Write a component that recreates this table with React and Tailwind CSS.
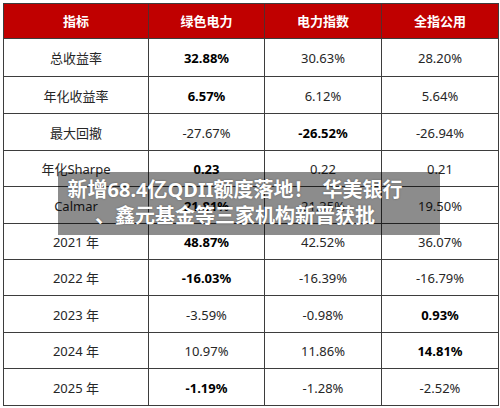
const rows = [
  { name: "总收益率", h: "h-[38px]", v: ["32.88%", "30.63%", "28.20%"], bold: 0 },
  { name: "年化收益率", h: "h-[37px]", v: ["6.57%", "6.12%", "5.64%"], bold: 0 },
  { name: "最大回撤", h: "h-[37px]", v: ["-27.67%", "-26.52%", "-26.94%"], bold: 1 },
  { name: "年化Sharpe", h: "h-[36px]", v: ["0.23", "0.22", "0.21"], bold: 0 },
  { name: "Calmar", h: "h-[37px]", v: ["21.81%", "21.35%", "19.50%"], bold: 0 },
  { name: "2021 年", h: "h-[36px]", v: ["48.87%", "42.52%", "36.07%"], bold: 0 },
  { name: "2022 年", h: "h-[36px]", v: ["-16.03%", "-16.39%", "-16.79%"], bold: 0 },
  { name: "2023 年", h: "h-[37px]", v: ["-3.59%", "-0.98%", "0.93%"], bold: 2 },
  { name: "2024 年", h: "h-[36px]", v: ["10.97%", "11.86%", "14.81%"], bold: 2 },
  { name: "2025 年", h: "h-[37px]", v: ["-1.19%", "-1.28%", "-2.52%"], bold: 0 },
];

const headers = ["指标", "绿色电力", "电力指数", "全指公用"];

export default function App() {
  return (
    <div
      className="relative w-[500px] h-[408px] bg-white overflow-hidden"
      style={{ fontFamily: '"Noto Sans", "Noto Sans CJK SC", sans-serif' }}
    >
      {/* Table */}
      <div className="ml-[3px] mt-[3px] w-[496px] border border-[#3d3d3d] text-[13px] text-[#262626]">
        <div className="grid grid-cols-[145px_116px_117px_1fr] h-[34px] bg-[#c00000] text-white font-bold">
          {headers.map((h, i) => (
            <div
              key={h}
              className={`flex items-center justify-center pt-[2px] ${
                i < 3 ? "border-r border-[#5a2a2a]" : ""
              }`}
            >
              {h}
            </div>
          ))}
        </div>

        {rows.map((r) => (
          <div
            key={r.name}
            className={`grid grid-cols-[145px_116px_117px_1fr] border-t border-[#3d3d3d] ${r.h}`}
          >
            <div className="flex items-center justify-center pt-[3px] border-r border-[#3d3d3d]">
              {r.name}
            </div>
            {r.v.map((v, i) => (
              <div
                key={i}
                className={`flex items-center justify-center pt-[3px] ${
                  i < 2 ? "border-r border-[#3d3d3d]" : ""
                } ${i === r.bold ? "font-bold text-black" : ""}`}
              >
                {v}
              </div>
            ))}
          </div>
        ))}
      </div>

      {/* Overlay caption */}
      <div className="absolute left-[58px] top-[172px] w-[382px] h-[63px] bg-black/45 pt-[5px] pr-[28px] text-center text-white font-bold text-[20px] leading-[26px] [text-shadow:0_0_2px_rgba(0,0,0,0.35)]">
        <div className="whitespace-nowrap">
          新增68.4亿QDII额度落地<span className="mr-[9px]">！</span>华美银行
        </div>
        <div className="whitespace-nowrap">、鑫元基金等三家机构新晋获批</div>
      </div>
    </div>
  );
}
